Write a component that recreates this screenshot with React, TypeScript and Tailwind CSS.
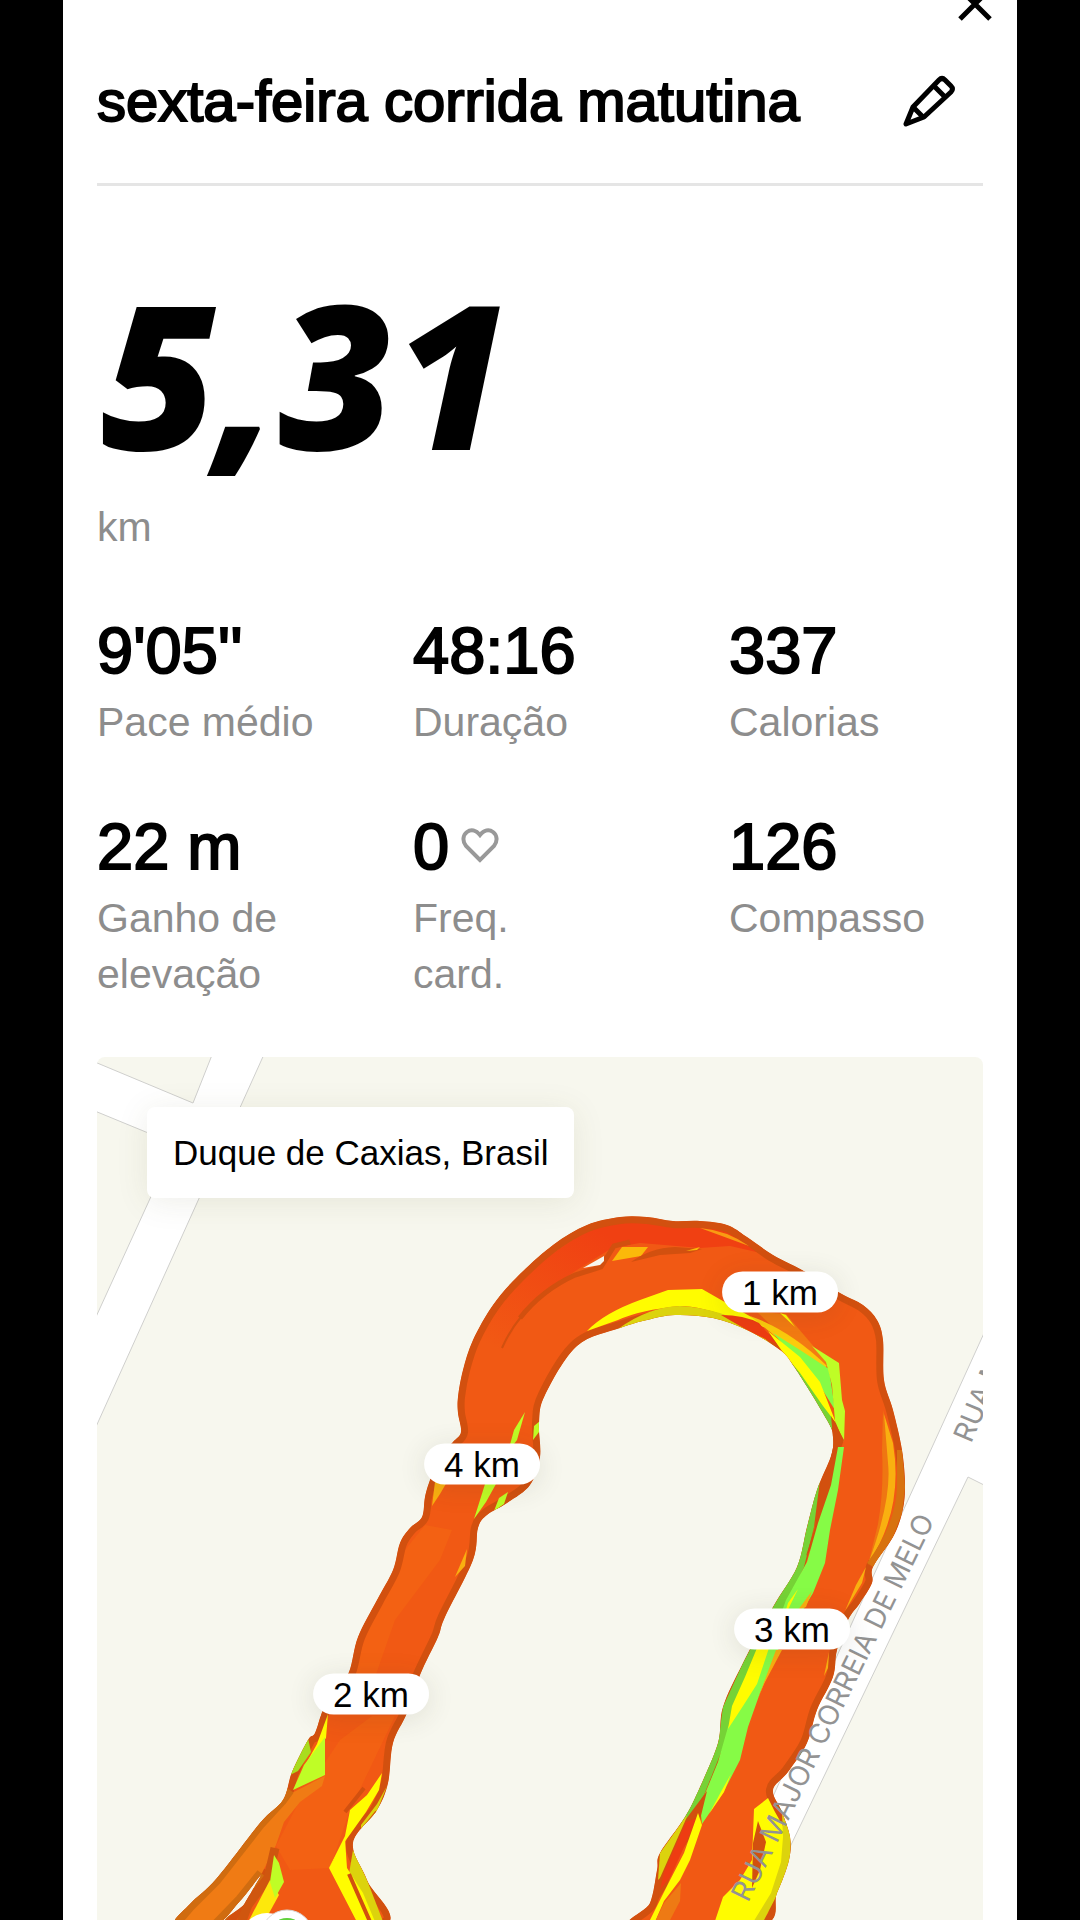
import React from "react";

interface Stat {
  value: string;
  label: string;
  heart?: boolean;
}

interface KmPin {
  label: string;
  x: number;
  y: number;
}

type Point = [number, number];

interface Patch {
  fill: string;
  d: string;
}

const STATS: Stat[] = [
  { value: "9'05''", label: "Pace médio" },
  { value: "48:16", label: "Duração" },
  { value: "337", label: "Calorias" },
  { value: "22 m", label: "Ganho de\nelevação" },
  { value: "0", label: "Freq.\ncard.", heart: true },
  { value: "126", label: "Compasso" },
];

// Map drawing space
const MAP = { x: 97, y: 1057, width: 886, height: 863 };

// Pin centres, in map drawing space
const PINS: KmPin[] = [
  { label: "1 km", x: 780, y: 1292 },
  { label: "4 km", x: 482, y: 1464 },
  { label: "3 km", x: 792, y: 1629 },
  { label: "2 km", x: 371, y: 1694 },
];

const TRACK: Point[] = [
  [175, 1924], [190, 1904], [217, 1878], [260, 1823], [283, 1800], [292, 1772],
  [308, 1740], [315, 1733], [323, 1710], [335, 1690], [349, 1672], [358, 1637],
  [377, 1600], [393, 1570], [400, 1543], [410, 1528], [422, 1517], [425, 1497],
  [430, 1480], [440, 1456], [453, 1442], [461, 1432], [458, 1413], [458, 1397],
  [463, 1370], [473, 1340], [493, 1305], [517, 1277], [553, 1245], [587, 1225],
  [620, 1217], [647, 1217], [673, 1221], [700, 1221], [727, 1225], [747, 1237],
  [773, 1255], [802, 1270], [840, 1293], [863, 1305], [877, 1320], [883, 1340],
  [884, 1380], [893, 1410], [902, 1450], [905, 1487], [902, 1513], [893, 1537],
  [873, 1567], [872, 1583], [860, 1603], [848, 1620], [837, 1650], [833, 1677],
  [817, 1710], [807, 1743], [788, 1772], [773, 1790], [782, 1812], [790, 1837],
  [789, 1860], [777, 1893], [760, 1926], [634, 1926], [650, 1903], [657, 1870],
  [660, 1853], [685, 1817], [700, 1787], [718, 1743], [723, 1707], [743, 1663],
  [773, 1607], [797, 1567], [807, 1527], [817, 1490], [831, 1456], [833, 1437],
  [827, 1420], [795, 1368], [780, 1350], [747, 1330], [713, 1318], [675, 1315],
  [647, 1320], [620, 1328], [577, 1346], [545, 1395], [539, 1423], [540, 1457],
  [530, 1485], [507, 1503], [487, 1515], [478, 1528], [473, 1560], [445, 1617],
  [438, 1637], [420, 1675], [407, 1713], [393, 1743], [388, 1783], [377, 1810],
  [353, 1843], [367, 1880], [383, 1926], [233, 1926], [245, 1903], [261, 1875],
  [240, 1901], [214, 1926],
];

const ORANGE = "#f15914";
const RUST = "#d2500f";
const YELLOW = "#fffc00";
const OLIVE = "#dcd30d";
const GREEN = "#86fb46";
const LEAF = "#76d236";
const LIME = "#bffd26";
const AMBER = "#f9b010";
const RED = "#ee3c12";

// Drawn over the rust edge of the track
const PATCHES: Patch[] = [
  // top bend
  { fill: "#fbb90a", d: "M622 1247L648 1247L641 1256L612 1261Z" },
  { fill: RUST, d: "M631 1262Q650 1248 675 1247L702 1249L690 1253L660 1255Z" },
  { fill: "#fbb90a", d: "M686 1251L700 1247L697 1250Z" },
  { fill: "#f99b12", d: "M700 1228Q726 1230 749 1246Q722 1236 700 1228Z" },
  { fill: YELLOW, d: "M587 1331Q604 1313 640 1300L668 1290L702 1289Q738 1310 775 1330L735 1319Q700 1306 680 1306Q640 1310 618 1320Z" },
  { fill: OLIVE, d: "M618 1329Q648 1307 680 1306Q720 1308 755 1329L797 1369L780 1351L747 1331L713 1319L675 1317L647 1321Z" },
  { fill: "#f37b12", d: "M757 1312L786 1314L827 1362L826 1370L790 1343Z" },
  { fill: YELLOW, d: "M780 1313L786 1315L795 1327Z" },
  { fill: "#fbcb0c", d: "M750 1316Q790 1330 827 1366L822 1369L775 1336Z" },
  { fill: LEAF, d: "M790 1360L802 1364L822 1392L832 1417L832 1430L812 1396Z" },
  { fill: GREEN, d: "M773 1333L800 1350L829 1369L835 1410L820 1386Z" },
  { fill: YELLOW, d: "M768 1331L800 1357L820 1382L836 1423L823 1406L800 1373L782 1351Z" },
  { fill: RED, d: "M721 1315Q744 1315 759 1323L777 1344L752 1333Z" },
  { fill: LIME, d: "M812 1346L839 1363L842 1400L845 1411L844 1442L835 1421L832 1385L826 1362Z" },
  { fill: RUST, d: "M831 1416L844 1440L838 1456L829 1470L832 1450L833 1437Z" },
  // right straight
  { fill: "#ef7612", d: "M883 1410L889 1440Q901 1500 868 1565L878 1524Q884 1490 882 1450Z" },
  { fill: AMBER, d: "M884 1414L893 1443Q904 1510 868 1564Q892 1500 888 1463Z" },
  { fill: "#d8720f", d: "M897 1450L902 1450L905 1487L902 1513L893 1537L873 1567L867 1563Q896 1524 897 1487Z" },
  { fill: AMBER, d: "M866 1567L862 1583L845 1611L856 1585Z" },
  { fill: AMBER, d: "M829 1652L828 1668L824 1676Z" },
  { fill: LEAF, d: "M820 1480L814 1527L804 1567L785 1607L768 1650L745 1680L733 1712L724 1745L704 1795L690 1817L680 1824L700 1787L718 1743L723 1707L743 1663L773 1607L797 1567L807 1527L815 1492Z" },
  { fill: RUST, d: "M834 1450L842 1452L822 1532L806 1556L815 1527L821 1484Z" },
  { fill: GREEN, d: "M838 1447L844 1447L838 1490L830 1530L825 1563L813 1593L797 1620L778 1650L760 1693L748 1727L740 1760L723 1793L702 1824L700 1806L718 1762L728 1727L750 1690L768 1650L786 1600L807 1562L818 1523L831 1485Z" },
  { fill: YELLOW, d: "M757 1648L769 1648L757 1684L743 1706L728 1729L732 1706L745 1677Z" },
  { fill: YELLOW, d: "M788 1603L798 1589L783 1620Z" },
  { fill: AMBER, d: "M812 1591L806 1607L798 1610Z" },
  { fill: AMBER, d: "M776 1650L782 1650L764 1684L757 1701Z" },
  { fill: YELLOW, d: "M731 1774L724 1792L709 1814L722 1790Z" },
  // lower right
  { fill: OLIVE, d: "M660 1853L687 1815L682 1838L664 1874L658 1880Z" },
  { fill: RUST, d: "M686 1819L707 1791L699 1824L677 1858L667 1886L658 1900L660 1878Z" },
  { fill: RED, d: "M664 1872L686 1822L697 1818L680 1856L671 1876L660 1890Z" },
  { fill: YELLOW, d: "M698 1813L702 1825L690 1860L680 1880L664 1901L654 1924L648 1924L668 1884L684 1853Z" },
  { fill: "#ee7a14", d: "M681 1883L680 1901L668 1924L654 1924L664 1903Z" },
  { fill: YELLOW, d: "M754 1809L768 1798L775 1812L787 1833L787 1862L774 1893L758 1924L714 1924L723 1897L740 1880L752 1860Z" },
  { fill: OLIVE, d: "M782 1812L791 1837L790 1860L778 1893L762 1924L752 1924L771 1893L781 1862L783 1837Z" },
  { fill: RUST, d: "M758 1821L766 1842L760 1870L752 1888L753 1843Z" },
  // left straight
  { fill: LIME, d: "M525 1412L517 1440L508 1452L514 1430Z" },
  { fill: LIME, d: "M540 1421L539 1432L533 1440L534 1426Z" },
  { fill: AMBER, d: "M435 1482L447 1482L440 1494L432 1506Z" },
  { fill: LIME, d: "M485 1484L496 1484L486 1502L474 1519L480 1500Z" },
  { fill: LIME, d: "M508 1492L504 1504L494 1511L499 1498Z" },
  { fill: AMBER, d: "M467 1549L465 1566L455 1577Z" },
  // lower left
  { fill: "#a9dc1e", d: "M308 1738L311 1752L298 1771L290 1775Z" },
  { fill: YELLOW, d: "M328 1714L326 1738L303 1769L317 1744Z" },
  { fill: LIME, d: "M325 1737L325 1775L293 1790L304 1765Z" },
  { fill: YELLOW, d: "M382 1773L379 1790L366 1812L346 1840L329 1868L345 1836L350 1810L367 1795Z" },
  { fill: OLIVE, d: "M387 1786L377 1811L361 1834L361 1825L377 1804Z" },
  { fill: OLIVE, d: "M353 1850L367 1880L384 1924L374 1924L349 1874Z" },
  { fill: YELLOW, d: "M345 1839L347 1868L363 1893L376 1924L358 1924L329 1868Z" },
];

// Closed Catmull-Rom curve through the points
const smooth = (points: Point[]): string => {
  const n = points.length;
  let d = `M${points[0][0]} ${points[0][1]}`;
  for (let i = 0; i < n; i++) {
    const [p0, p1, p2, p3] = [-1, 0, 1, 2].map((k) => points[(i + k + n) % n]);
    d += `C${p1[0] + (p2[0] - p0[0]) / 6} ${p1[1] + (p2[1] - p0[1]) / 6}`;
    d += ` ${p2[0] - (p3[0] - p1[0]) / 6} ${p2[1] - (p3[1] - p1[1]) / 6}`;
    d += ` ${p2[0]} ${p2[1]}`;
  }
  return d + "Z";
};

const trackPath = smooth(TRACK);

const CloseIcon: React.FC = () => (
  <svg className="h-[34px] w-[34px]" viewBox="0 0 34 34" fill="none" stroke="#000" strokeWidth="5" aria-hidden="true">
    <path d="M2 2L32 32M32 2L2 32" />
  </svg>
);

const PencilIcon: React.FC = () => (
  <svg
    className="h-[52px] w-[52px]"
    viewBox="0 0 52 52"
    fill="none"
    stroke="#000"
    strokeWidth="5"
    strokeLinejoin="round"
    aria-hidden="true"
  >
    <path d="M3 49L10 32L36 5Q39 2 42 5L48 11Q51 14 48 17L21 42Z" />
    <path d="M31 11L42 22M10 32L20 42" />
  </svg>
);

const HeartIcon: React.FC = () => (
  <svg
    className="mb-1 h-[35px] w-[38px]"
    viewBox="0 0 38 35"
    fill="none"
    stroke="#999"
    strokeWidth="4"
    aria-hidden="true"
  >
    <path d="M19 32L5 18C1 13 2 7 6 4C10 1 15 2 19 7C23 2 28 1 32 4C36 7 37 13 33 18Z" />
  </svg>
);

const StatItem: React.FC<{ stat: Stat }> = ({ stat }) => (
  <div className="flex flex-col gap-[7px]">
    <dd className="order-1 flex items-center gap-3 text-[65px] leading-[72px] [-webkit-text-stroke:2px_currentColor]">
      {stat.value}
      {stat.heart && <HeartIcon />}
    </dd>
    <dt className="order-2 text-[41px] leading-14 whitespace-pre-line text-[#8d8d8d]">{stat.label}</dt>
  </div>
);

const RouteDrawing: React.FC = () => (
  <svg
    className="block w-full"
    viewBox={`${MAP.x} ${MAP.y} ${MAP.width} ${MAP.height}`}
    role="img"
    aria-label="Percurso da corrida"
  >
    <defs>
      <clipPath id="track-clip">
        <path d={trackPath} />
      </clipPath>
      <linearGradient id="top-red" x1="0" y1="1" x2="1" y2="0">
        <stop offset="0.2" stopColor={ORANGE} />
        <stop offset="0.7" stopColor="#f04012" />
      </linearGradient>
    </defs>

    {/* streets */}
    <g fill="#fff" stroke="#cfcfcd" strokeWidth="1">
      <path d="M90 1060L193 1103L214 1050L266 1050L90 1440L90 1330L175 1144L90 1109Z" />
      <path d="M990 1320L714 1926L752 1926L968 1477L990 1488Z" />
    </g>

    {/* track */}
    <g clipPath="url(#track-clip)">
      <path d={trackPath} fill={ORANGE} />
      <path
        d="M461 1395L475 1345L500 1300L540 1262L590 1228L640 1220L700 1224L740 1232L765 1254L730 1246L700 1248L640 1243L612 1248L580 1268L550 1288L520 1318L503 1350L485 1400Z"
        fill="url(#top-red)"
      />
      <path d="M300 1800L340 1740L372 1716L395 1716L350 1810L330 1868L290 1870L276 1846Z" fill="#f36113" />
      <path d="M395 1620L440 1560L452 1530L425 1525L405 1550L370 1625L350 1680L374 1680Z" fill="#f36113" />
      <path d={trackPath} fill="none" stroke={RUST} strokeWidth="14" strokeLinejoin="round" />
      <path d="M520 1318Q542 1290 575 1275L601 1267L614 1246L630 1242" fill="none" stroke={RUST} strokeWidth="5" />
      <path d="M502 1348Q510 1330 521 1317" fill="none" stroke={RUST} strokeWidth="2" />
      <path d="M583 1268L604 1256L604 1261L600 1265Z" fill="#f7f7ee" />
      {/* side branch */}
      <path d="M325 1776L286 1796L262 1824L218 1880L174 1926L216 1926L262 1873L276 1845L284 1822L300 1802L322 1786Z" fill="#f07b14" />
      <path
        d="M290 1790L282 1801L260 1825L217 1880L190 1907L174 1926M216 1924L240 1899L261 1873"
        fill="none"
        stroke="#d06c10"
        strokeWidth="9"
        strokeLinejoin="round"
      />
      <path d="M275 1848L268 1878L248 1905L240 1926" fill="none" stroke="#cf560f" strokeWidth="9" />
      <path d="M270 1880L279 1895L262 1926L246 1926Z" fill="#fde80c" />
      <path d="M274 1855L279 1863L284 1882L275 1898L270 1882Z" fill={LIME} />
      {PATCHES.map((patch) => (
        <path key={patch.d} d={patch.d} fill={patch.fill} />
      ))}
      <path d="M364 1788L345 1812M377 1812L357 1837M349 1874L371 1924" stroke={RUST} strokeWidth="4" />
    </g>

    {/* start and finish markers */}
    <circle cx="267" cy="1939" r="26" fill="#fff" />
    <circle cx="287" cy="1936" r="26" fill="#fff" stroke="#d8d8d8" strokeWidth="1" />
    <circle cx="287" cy="1936" r="18" fill="#5fd13a" />

    <g className="font-['Inter',sans-serif] text-[28px]" fill="#939393">
      <text textAnchor="end" transform="translate(935 1520) rotate(-64)">
        RUA MAJOR CORREIA DE MELO
      </text>
      <text transform="translate(971 1444) rotate(-67)">RUA MAJOR</text>
    </g>
  </svg>
);

const RunMap: React.FC = () => (
  <section className="relative mt-[55px] overflow-hidden rounded-t-lg bg-[#f7f7ee]">
    <RouteDrawing />
    <p className="absolute top-[50px] left-[50px] rounded-lg bg-white px-[26px] py-[18px] text-[35px] leading-[55px] whitespace-nowrap shadow-[0_4px_32px_rgba(90,90,40,0.1)]">
      Duque de Caxias, Brasil
    </p>
    {PINS.map((pin) => (
      <span
        key={pin.label}
        className="absolute -translate-x-1/2 -translate-y-1/2 rounded-full bg-white px-5 text-[35px] leading-[41px] whitespace-nowrap shadow-[0_4px_28px_rgba(60,60,40,0.12)]"
        style={{
          left: `${((pin.x - MAP.x) / MAP.width) * 100}%`,
          top: `${((pin.y - MAP.y) / MAP.height) * 100}%`,
        }}
      >
        {pin.label}
      </span>
    ))}
  </section>
);

const App: React.FC = () => {
  return (
    <div className="min-h-screen bg-black px-[63px] font-['Liberation_Sans',Arial,sans-serif] text-black">
      <main className="min-h-screen bg-white">
        <div className="flex h-[21px] items-end justify-end overflow-hidden pr-[25px]">
          <button type="button" aria-label="Fechar">
            <CloseIcon />
          </button>
        </div>

        <div className="px-[34px]">
          <header className="mt-12 flex items-center justify-between border-b-[3px] border-[#e5e5e5] pr-7 pb-[50px]">
            <h1 className="text-[58px] leading-16 font-normal [-webkit-text-stroke:2px_currentColor]">
              sexta-feira corrida matutina
            </h1>
            <button type="button" aria-label="Editar">
              <PencilIcon />
            </button>
          </header>

          <p className="mt-[83px] pl-1 font-['Open_Sans',sans-serif] text-[200px] leading-[208px] font-extrabold italic">
            5,31
          </p>
          <p className="mt-[22px] text-[41px] leading-14 text-[#8d8d8d]">km</p>

          <dl className="mt-15 grid grid-cols-3 gap-x-[62px] gap-y-[61px]">
            {STATS.map((stat) => (
              <StatItem key={stat.label} stat={stat} />
            ))}
          </dl>

          <RunMap />
        </div>
      </main>
    </div>
  );
};

export default App;
